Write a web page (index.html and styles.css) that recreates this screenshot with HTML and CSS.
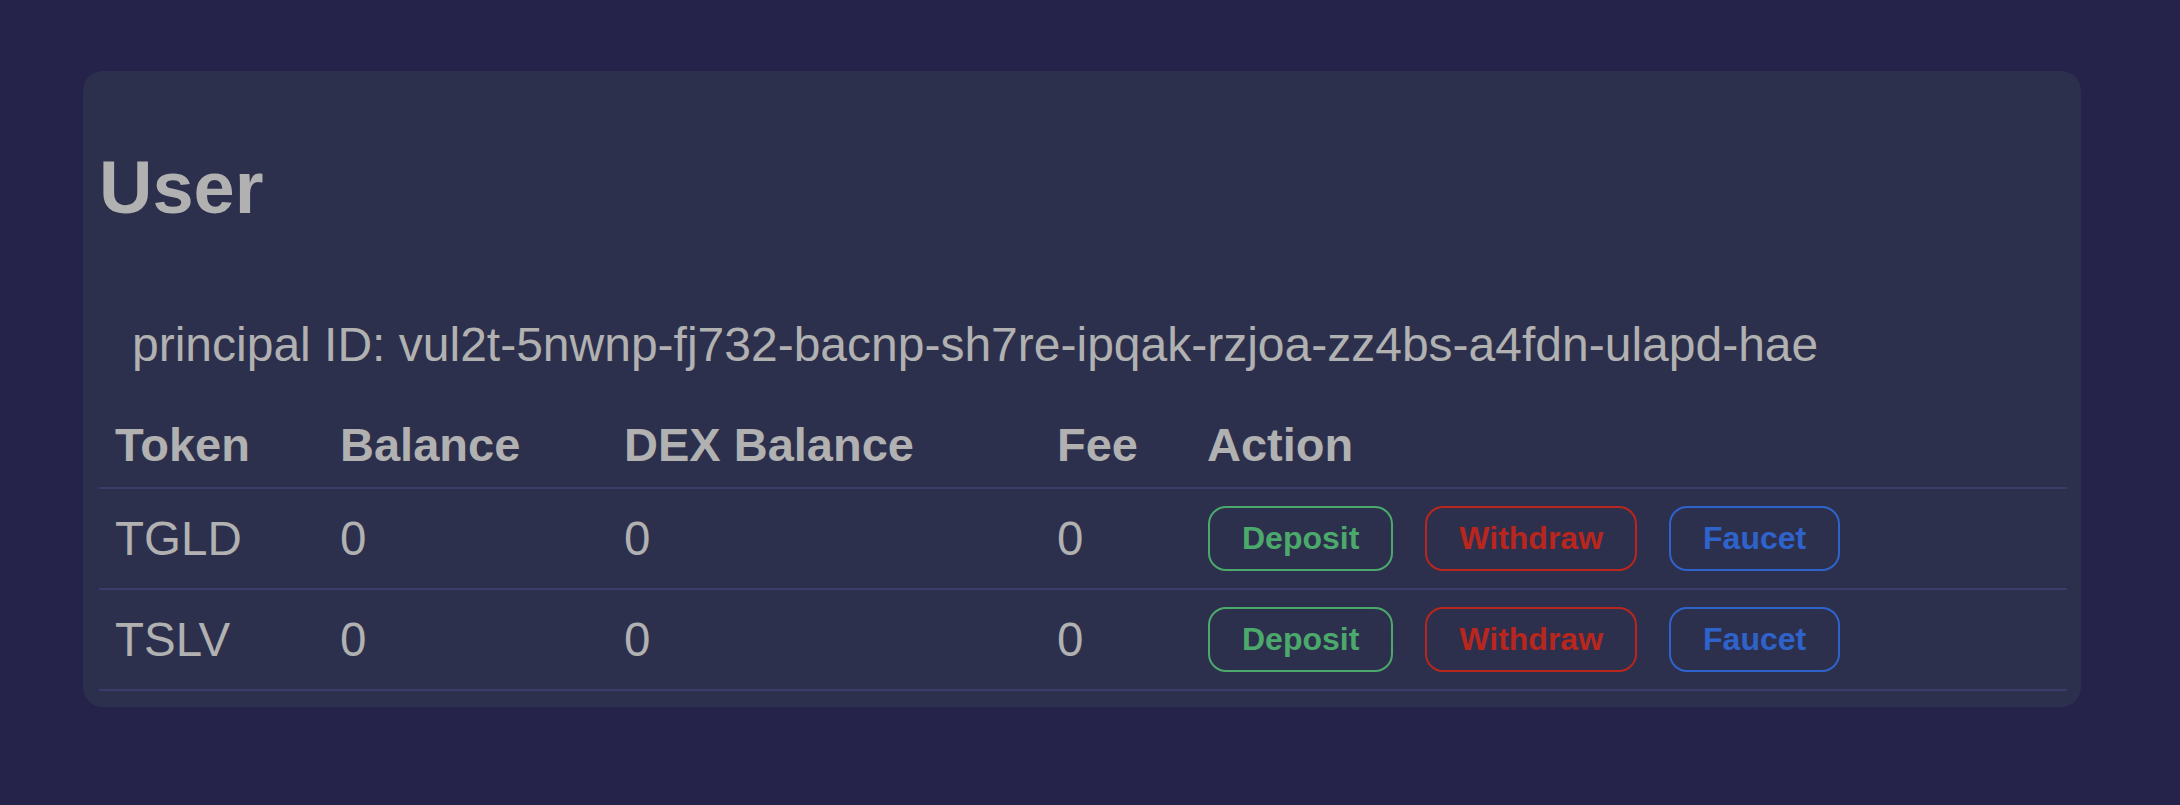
FILE: index.html
```html
<!DOCTYPE html>
<html lang="en">
<head>
<meta charset="utf-8">
<title>User</title>
<link rel="stylesheet" href="styles.css">
</head>
<body>
<main class="card">
  <h1 class="title">User</h1>
  <div class="principal">principal ID: vul2t-5nwnp-fj732-bacnp-sh7re-ipqak-rzjoa-zz4bs-a4fdn-ulapd-hae</div>
  <table class="tokens">
    <colgroup>
      <col class="c-token">
      <col class="c-bal">
      <col class="c-dex">
      <col class="c-fee">
      <col class="c-act">
    </colgroup>
    <thead>
      <tr><th>Token</th><th>Balance</th><th>DEX Balance</th><th>Fee</th><th>Action</th></tr>
    </thead>
    <tbody>
      <tr>
        <td>TGLD</td><td>0</td><td>0</td><td>0</td>
        <td><div class="actions"><button class="btn btn-green">Deposit</button><button class="btn btn-red">Withdraw</button><button class="btn btn-blue">Faucet</button></div></td>
      </tr>
      <tr>
        <td>TSLV</td><td>0</td><td>0</td><td>0</td>
        <td><div class="actions"><button class="btn btn-green">Deposit</button><button class="btn btn-red">Withdraw</button><button class="btn btn-blue">Faucet</button></div></td>
      </tr>
    </tbody>
  </table>
</main>
</body>
</html>
```
FILE: styles.css
```css
html, body {
  margin: 0;
  padding: 0;
}
body {
  background: #25234a;
  font-family: "Liberation Sans", Arial, sans-serif;
  color: #b1b1b1;
  padding: 71px 0 0 83px;
  min-height: 805px;
  box-sizing: border-box;
}
.card {
  width: 1998px;
  box-sizing: border-box;
  background: #2d304d;
  border-radius: 20px;
  padding: 16px 14px 16px 16px;
}
.title {
  margin: 58px 0 0;
  font-size: 74px;
  line-height: 85px;
  font-weight: bold;
}
.principal {
  margin: 88px 0 0 33px;
  font-size: 48px;
  line-height: 54px;
}
.tokens {
  margin-top: 30px;
  width: 1968px;
  border-collapse: collapse;
  table-layout: fixed;
}
.c-token { width: 225px; }
.c-bal { width: 284px; }
.c-dex { width: 433px; }
.c-fee { width: 150px; }
.tokens th {
  text-align: left;
  font-size: 47px;
  line-height: 53px;
  font-weight: bold;
  padding: 16px 16px;
  border-bottom: 2px solid #3c3b6b;
}
.tokens td {
  text-align: left;
  font-size: 47.5px;
  line-height: 54px;
  padding: 17px 16px;
  border-bottom: 2px solid #3c3b6b;
  vertical-align: middle;
}
.tokens td:last-child {
  padding-left: 17px;
}
.actions {
  display: flex;
  gap: 32px;
}
.btn {
  background: transparent;
  font-family: "Liberation Sans", Arial, sans-serif;
  font-weight: bold;
  font-size: 32px;
  line-height: 37px;
  padding: 12px 32px;
  border: 2px solid;
  border-radius: 18px;
}
.btn-green { color: #4ba96b; border-color: #4ba96b; }
.btn-red { color: #b8261d; border-color: #b8261d; }
.btn-blue { color: #2f63cc; border-color: #2f63cc; }
```
